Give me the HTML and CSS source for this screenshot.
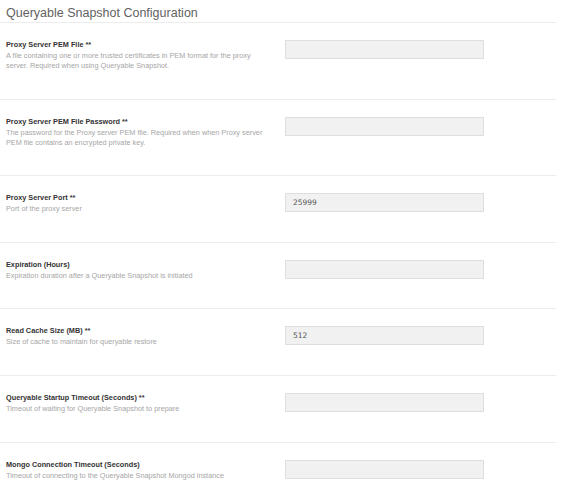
FILE: index.html
```html
<!DOCTYPE html>
<html>
<head>
<meta charset="utf-8">
<link rel="stylesheet" href="styles.css">
</head>
<body>
<div class="page">
  <h1 class="title">Queryable Snapshot Configuration</h1>
  <div class="row">
    <div class="info">
      <div class="label">Proxy Server PEM File **</div>
      <div class="desc">A file containing one or more trusted certificates in PEM format for the proxy server. Required when using Queryable Snapshot.</div>
    </div>
    <input class="field" type="text" value="">
  </div>
  <div class="row">
    <div class="info">
      <div class="label">Proxy Server PEM File Password **</div>
      <div class="desc">The password for the Proxy server PEM file. Required when when Proxy server PEM file contains an encrypted private key.</div>
    </div>
    <input class="field" type="text" value="">
  </div>
  <div class="row">
    <div class="info">
      <div class="label">Proxy Server Port **</div>
      <div class="desc">Port of the proxy server</div>
    </div>
    <input class="field" type="text" value="25999">
  </div>
  <div class="row">
    <div class="info">
      <div class="label">Expiration (Hours)</div>
      <div class="desc">Expiration duration after a Queryable Snapshot is initiated</div>
    </div>
    <input class="field" type="text" value="">
  </div>
  <div class="row">
    <div class="info">
      <div class="label">Read Cache Size (MB) **</div>
      <div class="desc">Size of cache to maintain for queryable restore</div>
    </div>
    <input class="field" type="text" value="512">
  </div>
  <div class="row">
    <div class="info">
      <div class="label">Queryable Startup Timeout (Seconds) **</div>
      <div class="desc">Timeout of waiting for Queryable Snapshot to prepare</div>
    </div>
    <input class="field" type="text" value="">
  </div>
  <div class="row">
    <div class="info">
      <div class="label">Mongo Connection Timeout (Seconds)</div>
      <div class="desc">Timeout of connecting to the Queryable Snapshot Mongod instance</div>
    </div>
    <input class="field" type="text" value="">
  </div>
</div>
</body>
</html>
```
FILE: styles.css
```css
html, body {
  margin: 0;
  padding: 0;
  background: #ffffff;
}
.page {
  width: 556px;
  font-family: "Liberation Sans", Arial, sans-serif;
}
.title {
  margin: 0;
  padding: 5px 6px 0;
  height: 17px;
  font-size: 12.5px;
  line-height: 17px;
  font-weight: normal;
  color: #626262;
  border-bottom: 1px solid #ececec;
}
.row {
  display: flex;
  align-items: flex-start;
  border-bottom: 1px solid #ececec;
  padding: 0 0 0 6px;
}
.info {
  width: 264px;
  padding: 16px 0 27.6px;
  margin-right: 15px;
}
.label {
  font-size: 7.3px;
  line-height: 12px;
  font-weight: bold;
  color: #333333;
}
.desc {
  font-size: 7.3px;
  line-height: 10px;
  color: #a6a6a6;
}
.field {
  box-sizing: border-box;
  width: 199px;
  height: 19px;
  margin: 17px 0 0;
  padding: 0 7px;
  border: 1px solid #dedede;
  background: #f1f1f1;
  font-family: "DejaVu Sans", sans-serif;
  font-size: 7.5px;
  color: #555555;
  outline: none;
}
```
